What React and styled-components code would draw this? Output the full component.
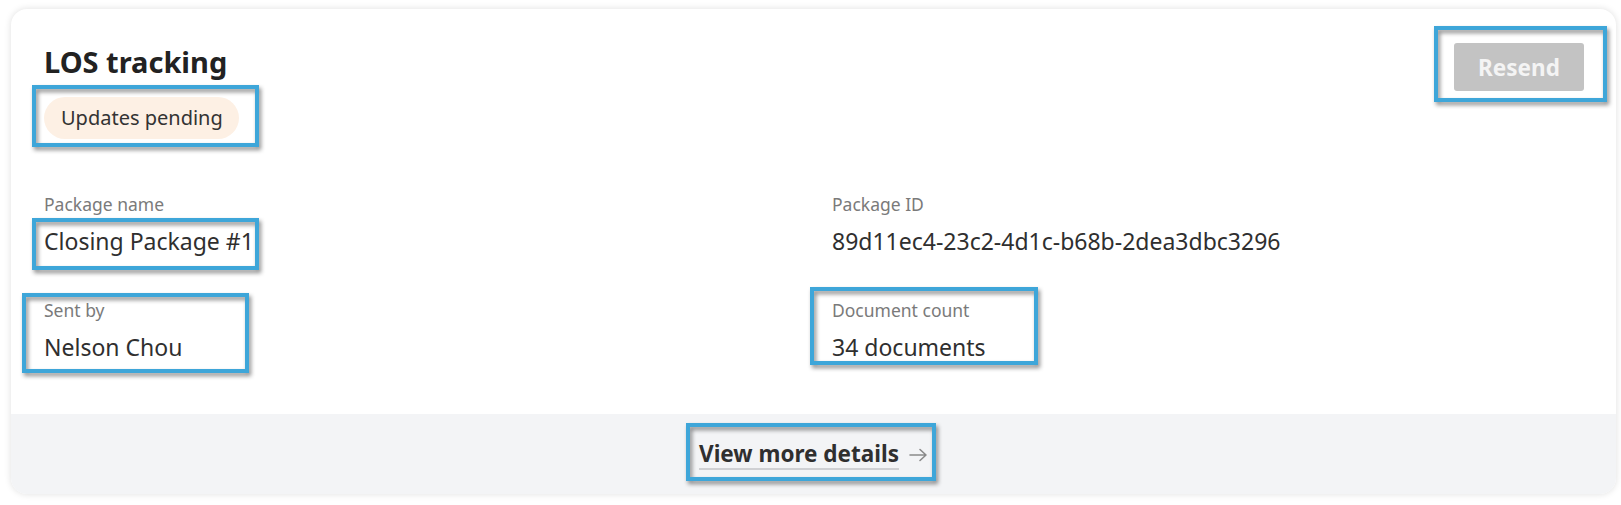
import React from "react";
import styled, { createGlobalStyle } from "styled-components";

const Global = createGlobalStyle`
  html, body { margin: 0; padding: 0; background: #ffffff; }
  body { font-family: "Noto Sans", "Open Sans", Arial, sans-serif; color: #2b2b2b; }
  * { box-sizing: border-box; }
`;

const Page = styled.div`
  position: relative;
  width: 1621px;
  height: 505px;
  padding: 9px 5px 11px 11px;
`;

const Card = styled.section`
  width: 1605px;
  height: 485px;
  background: #ffffff;
  border-radius: 16px;
  box-shadow: 0 0 7px rgba(0, 0, 0, 0.13);
  overflow: hidden;
  display: flex;
  flex-direction: column;
`;

const Body = styled.div`
  flex: 1;
  padding: 34px 32px 0 33px;
  display: flex;
  flex-direction: column;
`;

const Header = styled.div`
  display: flex;
  justify-content: space-between;
  align-items: flex-start;
`;

const TitleBlock = styled.div`
  display: flex;
  flex-direction: column;
  align-items: flex-start;
`;

const Title = styled.h2`
  margin: 1px 0 0;
  font-size: 29px;
  line-height: 36px;
  font-weight: 700;
  color: #222222;
`;

const Pill = styled.span`
  margin-top: 17px;
  height: 42px;
  padding: 0 16px 0 17px;
  border-radius: 21px;
  background: #fdf0e4;
  font-size: 20px;
  line-height: 42px;
  color: #333333;
`;

const Button = styled.button`
  width: 130px;
  height: 48px;
  border: none;
  border-radius: 3px;
  background: #c3c3c3;
  color: #f4f4f4;
  font-family: inherit;
  font-size: 22.5px;
  font-weight: 700;
  cursor: default;
`;

const Fields = styled.div`
  margin-top: 53px;
  display: grid;
  grid-template-columns: 1fr 1fr;
  column-gap: 36px;
  row-gap: 42px;
`;

const Field = styled.div`
  display: flex;
  flex-direction: column;
  gap: 10px;
`;

const Label = styled.span`
  font-size: 17.5px;
  line-height: 24px;
  color: #7a7a7a;
`;

const Value = styled.span`
  font-size: 23px;
  line-height: 30px;
  color: #2f2f2f;
`;

const Footer = styled.div`
  height: 80px;
  flex: none;
  background: #f3f4f6;
  display: flex;
  align-items: center;
  justify-content: center;
  gap: 10px;
  padding-top: 2px;
`;

const LinkText = styled.span`
  display: inline-block;
  font-size: 22.5px;
  line-height: 26px;
  font-weight: 700;
  color: #2f2f2f;
  padding-bottom: 1px;
  border-bottom: 2px solid #cfd0d3;
`;

const Arrow = styled.svg`
  width: 19px;
  height: 14px;
  margin-bottom: 1px;
`;

const Frame = styled.div`
  position: absolute;
  left: ${(p) => p.$x}px;
  top: ${(p) => p.$y}px;
  width: ${(p) => p.$w}px;
  height: ${(p) => p.$h}px;
  border: 4px solid #3ea6d9;
  filter: drop-shadow(2px 3px 2px rgba(0, 0, 0, 0.45));
  pointer-events: none;
`;

const frames = [
  { x: 32, y: 85, w: 227, h: 62 },
  { x: 1434, y: 26, w: 173, h: 76 },
  { x: 32, y: 218, w: 227, h: 52 },
  { x: 22, y: 293, w: 227, h: 80 },
  { x: 810, y: 287, w: 228, h: 78 },
  { x: 686, y: 423, w: 250, h: 58 },
];

export default function App() {
  return (
    <>
      <Global />
      <Page>
        <Card>
          <Body>
            <Header>
              <TitleBlock>
                <Title>LOS tracking</Title>
                <Pill>Updates pending</Pill>
              </TitleBlock>
              <Button>Resend</Button>
            </Header>
            <Fields>
              <Field>
                <Label>Package name</Label>
                <Value>Closing Package #1</Value>
              </Field>
              <Field>
                <Label>Package ID</Label>
                <Value>89d11ec4-23c2-4d1c-b68b-2dea3dbc3296</Value>
              </Field>
              <Field>
                <Label>Sent by</Label>
                <Value>Nelson Chou</Value>
              </Field>
              <Field>
                <Label>Document count</Label>
                <Value>34 documents</Value>
              </Field>
            </Fields>
          </Body>
          <Footer>
            <LinkText>View more details</LinkText>
            <Arrow viewBox="0 0 19 14" fill="none" stroke="#8a8a8a" strokeWidth="1.6" strokeLinecap="round" strokeLinejoin="round">
              <path d="M1 7h16M11 1.5L17 7l-6 5.5" />
            </Arrow>
          </Footer>
        </Card>
        {frames.map((f, i) => (
          <Frame key={i} $x={f.x} $y={f.y} $w={f.w} $h={f.h} />
        ))}
      </Page>
    </>
  );
}
